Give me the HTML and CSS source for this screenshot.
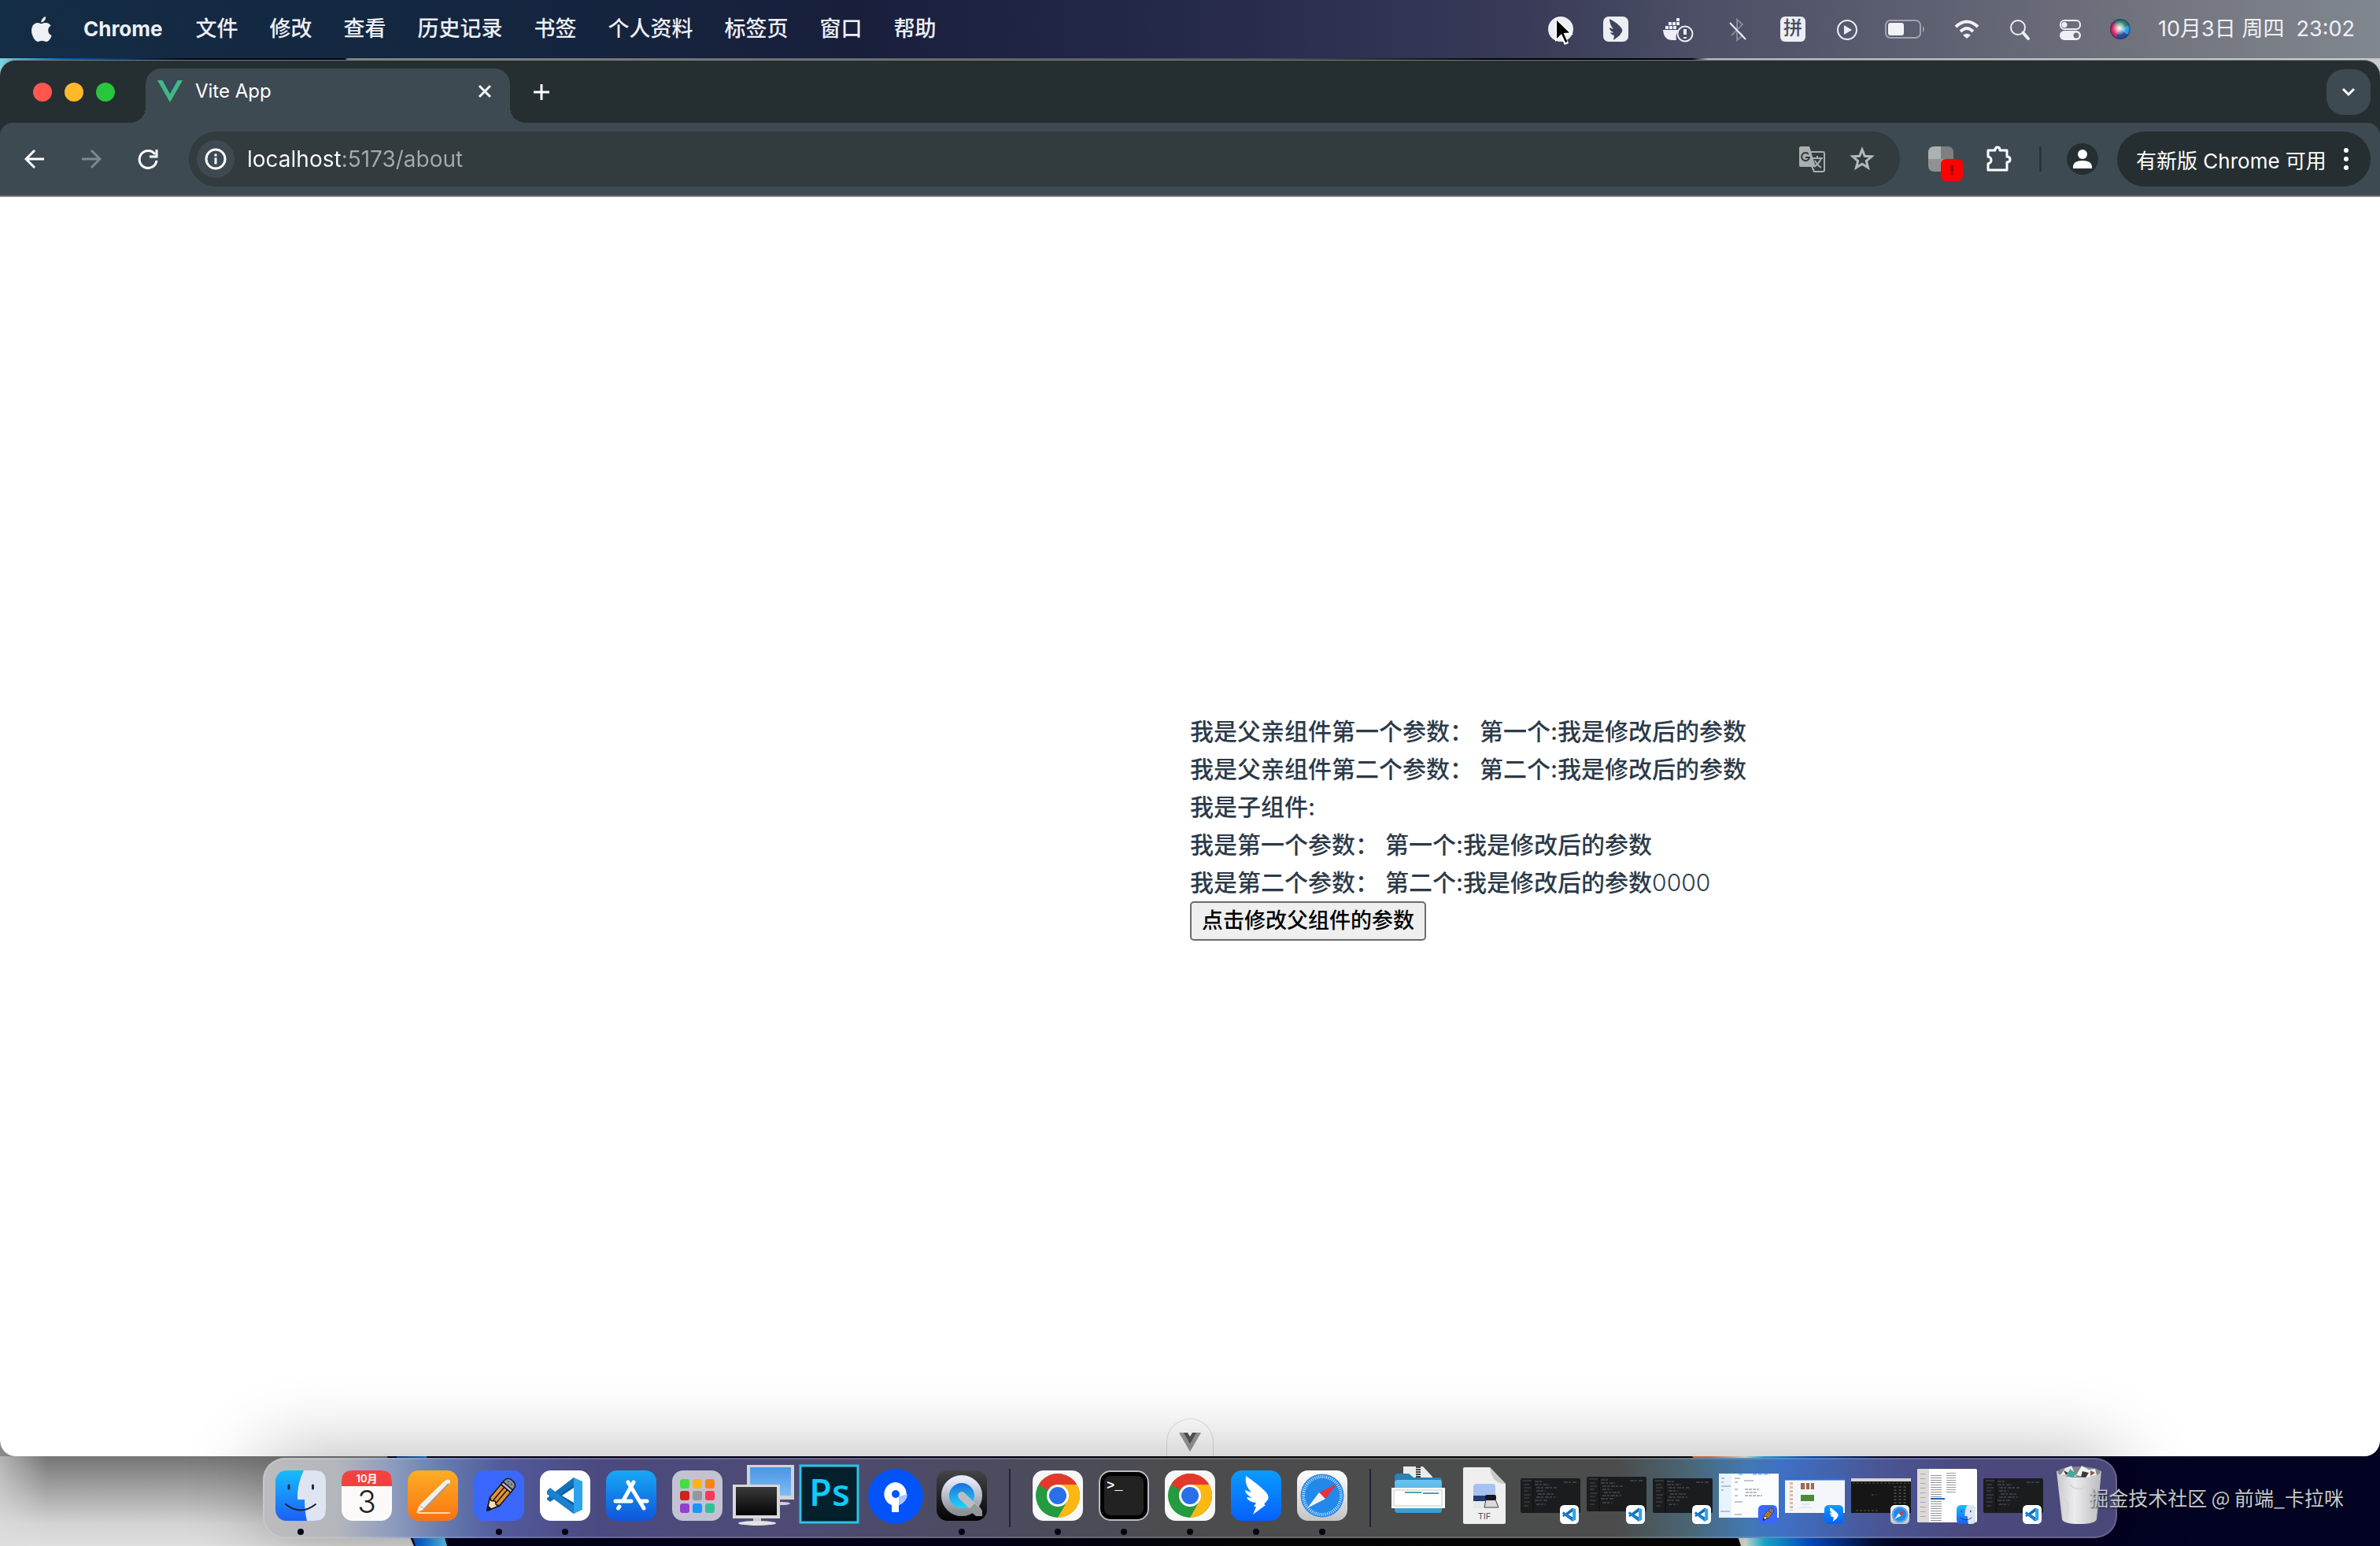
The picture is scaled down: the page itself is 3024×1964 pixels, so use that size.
FILE: index.html
```html
<!DOCTYPE html>
<html lang="zh-CN">
<head>
<meta charset="utf-8">
<meta name="viewport" content="width=device-width, initial-scale=1">
<title>Vite App</title>
<link rel="stylesheet" href="styles.css">
</head>
<body>
<svg class="defs" width="0" height="0" aria-hidden="true">
  <defs>
    <linearGradient id="g-finder" x2="0" y2="1"><stop stop-color="#17bdfd"/><stop offset="1" stop-color="#1c5ff5"/></linearGradient>
    <linearGradient id="g-pages" x2="0" y2="1"><stop stop-color="#fcad24"/><stop offset="1" stop-color="#fb7410"/></linearGradient>
    <linearGradient id="g-store" x2="0" y2="1"><stop stop-color="#17a9f5"/><stop offset="1" stop-color="#0f55dc"/></linearGradient>
    <linearGradient id="g-ding" x2="0" y2="1"><stop stop-color="#0a9cff"/><stop offset="1" stop-color="#0560ff"/></linearGradient>
    <linearGradient id="g-silver" x2="0" y2="1"><stop stop-color="#ffffff"/><stop offset="1" stop-color="#c4c4c4"/></linearGradient>
    <linearGradient id="g-qt" x2="0" y2="1"><stop stop-color="#434547"/><stop offset="1" stop-color="#030304"/></linearGradient>
    <linearGradient id="g-ring" x2="0" y2="1"><stop stop-color="#e6eafc"/><stop offset="1" stop-color="#8c9094"/></linearGradient>
    <linearGradient id="g-lens" x2="0" y2="1"><stop stop-color="#1b62d8"/><stop offset="1" stop-color="#22e4ff"/></linearGradient>
    <linearGradient id="g-sky" x2="0" y2="1"><stop stop-color="#4a94e4"/><stop offset="1" stop-color="#7fbef6"/></linearGradient>
    <linearGradient id="g-glass" x2="0" y2="1"><stop stop-color="#3a3a3a"/><stop offset="1" stop-color="#050505"/></linearGradient>
    <linearGradient id="g-folder" x2="0" y2="1"><stop stop-color="#69c3ee"/><stop offset="1" stop-color="#3a9bd1"/></linearGradient>
    <linearGradient id="g-bin" x2="1" y2="0"><stop stop-color="#c9c9cb"/><stop offset=".4" stop-color="#ececee"/><stop offset="1" stop-color="#bcbcc0"/></linearGradient>
    <radialGradient id="g-siri"><stop stop-color="#ffffff"/><stop offset=".35" stop-color="#ffffff" stop-opacity=".7"/><stop offset="1" stop-color="#ffffff" stop-opacity="0"/></radialGradient>

    <symbol id="finder" viewBox="0 0 64 64">
      <rect width="64" height="64" rx="14" fill="url(#g-finder)"/>
      <path d="M36 0H50Q64 0 64 14V50Q64 64 50 64H40Q37 52 37 37H28Q27 18 36 0Z" fill="#dfe4f3"/>
      <path d="M17 19v4M47.500 19v4" stroke="#1d2b3d" stroke-width="3" stroke-linecap="round"/>
      <path d="M13 43Q32 58 51 43" fill="none" stroke="#16222f" stroke-width="2" stroke-linecap="round"/>
    </symbol>
    <symbol id="notes" viewBox="0 0 64 64">
      <rect width="64" height="64" rx="14" fill="#3a68fc"/>
      <g transform="rotate(40 33 32)" stroke="#14161c" stroke-width="1.500" stroke-linejoin="round">
        <path d="M25 20V42L33 57L41 42V20Z" fill="#e5922e"/>
        <path d="M25 42L33 57L41 42L37 44L33 41L29 44Z" fill="#fbe0b4"/>
        <path d="M30 52L33 57L36 52Z" fill="#14161c"/>
        <path d="M30.500 20V42M35.500 20V42" fill="none"/>
        <path d="M25 20V14Q25 7 33 7T41 14V20Z" fill="#8a9098"/>
        <path d="M25 16h16v4H25z" fill="#b9bfd6"/>
        <path d="M30 11v1M35 11v1M32 14v.5" stroke-width="2"/>
      </g>
    </symbol>
    <symbol id="vscode" viewBox="0 0 64 64">
      <rect width="64" height="64" rx="14" fill="#fff"/>
      <path d="M43 9L19 31L13 26L9 28V30L43 55V41L28 32L43 22Z" fill="#0c61a5"/>
      <path d="M9 37L13 40L43 18V9L9 35Z" fill="#1470b8"/>
      <path d="M9 26L13 22L43 45V55L9 29Z" fill="#1c80cc"/>
      <path d="M43 9L54 14V50L43 55Z" fill="#2da3ef"/>
    </symbol>
    <symbol id="chrome" viewBox="0 0 64 64">
      <rect width="64" height="64" rx="14" fill="#f7f7f7"/>
      <circle cx="32" cy="32" r="28" fill="#249a41"/>
      <path d="M32 32L32 18H56.300A28 28 0 0 1 32 60L44 39Z" fill="#fcb714"/>
      <path d="M8.500 17A28 28 0 0 1 56.300 18H32A14 14 0 0 0 19.900 39Z" fill="#e5382b"/>
      <path d="M7.800 18L19.900 39L32 32Z" fill="#249a41"/>
      <circle cx="32" cy="32" r="14" fill="#fff"/>
      <circle cx="32" cy="32" r="11" fill="#2a6fea"/>
    </symbol>
    <symbol id="ding" viewBox="0 0 64 64">
      <rect width="64" height="64" rx="14" fill="url(#g-ding)"/>
      <path d="M19 7Q34 17 44 27Q49 32 47 37L42 43L44 44L28 56L32 46L29 46L32 41Q22 40 20 34L27 35Q18 30 18 25L26 28Q17 19 19 7Z" fill="#fff"/>
    </symbol>
    <symbol id="safari" viewBox="0 0 64 64">
      <rect width="64" height="64" rx="14" fill="url(#g-silver)"/>
      <circle cx="32" cy="32" r="27.500" fill="#2289ea"/>
      <circle cx="32" cy="32" r="24" fill="none" stroke="#c8e6ff" stroke-width="4" stroke-dasharray="1 1.500"/>
      <path d="M51 17L36 36L28 28Z" fill="#e8323c"/>
      <path d="M13 48L28 28L36 36Z" fill="#f0f2f5"/>
    </symbol>
    <symbol id="code" viewBox="0 0 76 44">
      <rect width="76" height="44" rx="2" fill="#1b1c1e"/>
      <path d="M3 3H14M4 8h7M4 12h9M4 16h6M4 21h9M4 25h7M4 30h8M4 35h6" stroke="#4a4d50"/>
      <path d="M18 4h9M18 8h18M20 12h26M20 16h12M22 20h22M20 24h24M18 28h16M20 33h12M55 5h16" stroke="#55606c" stroke-dasharray="5 1 3 2"/>
      <path d="M16 1V43" stroke="#0d0d0e"/>
    </symbol>
  </defs>
</svg>

<header class="menubar">
  <nav class="menus" aria-label="菜单栏">
    <button class="apple" aria-label="Apple">
      <svg width="26" height="32" viewBox="0 0 26 32" fill="#eef0f5"><path d="M18 0Q18.500 3 16.500 5.200T12.300 7.500Q12 4.800 14 2.500T18 0ZM12.900 9.300Q15.500 7.700 18.500 7.900Q22.400 8.200 24.700 11.500Q21 13.800 21.200 17.800Q21.400 22.400 25.700 24.200Q24.700 27.200 22.700 29.700Q20.900 31.900 19 32Q17.600 32 16.200 31.300Q13.500 30.200 10.800 31.300Q9.300 32 8.100 32Q6 31.800 4.200 29.400Q0 23.700 0 17.500Q.2 10.200 6 8.200Q8.200 7.500 10.500 8.500Q12 9.200 12.900 9.300Z"/></svg>
    </button>
    <button class="app-name">Chrome</button>
    <button>文件</button><button>修改</button><button>查看</button><button>历史记录</button><button>书签</button><button>个人资料</button><button>标签页</button><button>窗口</button><button>帮助</button>
  </nav>
  <div class="status">
    <svg width="34" height="40" viewBox="0 0 34 40"><circle cx="17" cy="20" r="16" fill="#eceef4"/><path d="M10 5V36L17 30L22 40L27 38L23 28L33 27Z" fill="#fff"/><path d="M12 9V32L18 26L23 37L25.500 36L20.500 25L28 24.500Z" fill="#000"/></svg>
    <svg width="46" height="40" viewBox="0 0 46 40"><rect x="7" y="4" width="32" height="32" rx="7" fill="#eceef4"/><path d="M15 7Q27 13 31 20Q32 23 29 26L28 28L20 34L21 28Q17 27 16 24Q20 25 20 24Q15 22 15 18L20 20Q15 14 15 7Z" fill="#40435a"/></svg>
    <svg width="52" height="40" viewBox="0 0 52 40" fill="#eceef4"><path d="M7 21H28Q22 25 24 34H19Q8 34 7 21Z"/><path d="M10 16h4v4h-4zM15 16h4v4h-4zM20 16h4v4h-4zM14 11h4v4h-4zM19 11h4v4h-4zM24 6h4v4h-4zM24 11h4v4h-4z"/><circle cx="35" cy="26" r="9.500" fill="#4b4e65" stroke="#eceef4" stroke-width="2"/><path d="M35 20v7M35 30v2" stroke="#eceef4" stroke-width="4"/></svg>
    <svg width="38" height="40" viewBox="0 0 38 40" fill="none"><path d="M12 28L26 14L19 8V34L26 28L22 24" stroke="#85889b" stroke-width="2"/><path d="M10 12L30 33" stroke="#eceef4" stroke-width="2"/></svg>
    <span class="ime">拼</span>
    <svg width="34" height="40" viewBox="0 0 34 40"><circle cx="17" cy="21" r="12" fill="none" stroke="#eceef4" stroke-width="2"/><path d="M13 15L23 21L13 27Z" fill="#eceef4"/></svg>
    <svg width="54" height="40" viewBox="0 0 54 40"><rect x="2" y="9" width="44" height="22" rx="6" fill="none" stroke="#a1a3b0" stroke-width="2"/><rect x="5" y="12" width="20" height="16" rx="3" fill="#f1f2f7"/><path d="M49 16Q53 20 49 24Z" fill="#a1a3b0"/></svg>
    <svg width="42" height="40" viewBox="0 0 42 40" fill="none" stroke="#f0f1f7" stroke-width="4"><path d="M7 17Q21 4 35 17M13 23Q21 15 29 23"/><path d="M16 27.500Q21 24 26 27.500L21 32Z" fill="#f0f1f7" stroke="none"/></svg>
    <svg width="36" height="40" viewBox="0 0 36 40" fill="none" stroke="#eff0f6"><circle cx="14" cy="18" r="9" stroke-width="2"/><path d="M20.500 24.500L27 32" stroke-width="4" stroke-linecap="round"/></svg>
    <svg width="30" height="40" viewBox="0 0 30 40"><rect x="2" y="9" width="25" height="11" rx="5" fill="none" stroke="#eff0f6" stroke-width="2"/><circle cx="7" cy="14.500" r="3.500" fill="#eff0f6"/><rect x="1" y="22" width="27" height="12" rx="6" fill="#eff0f6"/><circle cx="22" cy="28" r="3.500" fill="#6c6e7c"/></svg>
    <svg width="36" height="40" viewBox="0 0 36 40"><circle cx="18" cy="20" r="13" fill="#2a4a9c"/><path d="M18 20L11 9A13 13 0 0 0 12 31.500Z" fill="#d02a62"/><path d="M18 20L9 10.500A13 13 0 0 1 30 15Z" fill="#2c8072"/><path d="M18 20L30 14.500A13 13 0 0 1 28 28Z" fill="#2f9fe6"/><circle cx="18" cy="20" r="12" fill="none" stroke="#35305c" stroke-opacity=".6" stroke-width="2"/><circle cx="17" cy="19" r="9" fill="url(#g-siri)"/></svg>
    <time class="clock">10月3日 周四&nbsp; 23:02</time>
  </div>
</header>

<main class="window">
  <div class="tabstrip">
    <div class="lights"><button class="light red" aria-label="关闭"></button><button class="light yellow" aria-label="最小化"></button><button class="light green" aria-label="缩放"></button></div>
    <div class="tab">
      <svg width="32" height="28" viewBox="0 0 32 28"><path d="M0 0H6.500L16 17L25.500 0H32L16 28Z" fill="#41b883"/><path d="M6.500 0H12.500L16 6.500L19.500 0H25.500L16 17Z" fill="#35495e"/></svg>
      <span class="tab-title">Vite App</span>
      <button class="tab-close" aria-label="关闭标签页"><svg width="18" height="18" viewBox="0 0 18 18"><path d="M2 2L16 16M16 2L2 16" stroke="#f4f7f8" stroke-width="3"/></svg></button>
    </div>
    <button class="tab-new" aria-label="新标签页"><svg width="22" height="22" viewBox="0 0 22 22"><path d="M11 1V21M1 11H21" stroke="#fff" stroke-width="3"/></svg></button>
    <button class="tab-search" aria-label="搜索标签页"><svg width="18" height="14" viewBox="0 0 18 14"><path d="M2 3L9 10L16 3" fill="none" stroke="#fff" stroke-width="3"/></svg></button>
  </div>
  <div class="toolbar">
    <button class="tool" aria-label="后退"><svg width="26" height="26" viewBox="0 0 26 26" fill="none" stroke="#fff" stroke-width="3"><path d="M25 13H3M13 2L2 13L13 24"/></svg></button>
    <button class="tool" aria-label="前进"><svg width="26" height="26" viewBox="0 0 26 26" fill="none" stroke="#7c8990" stroke-width="3"><path d="M1 13H23M13 2L24 13L13 24"/></svg></button>
    <button class="tool" aria-label="重新加载"><svg width="26" height="26" viewBox="0 0 26 26" fill="none" stroke="#fff" stroke-width="3"><path d="M22 7A11 11 0 1 0 24 15"/><path d="M24 1V10H15" /></svg></button>
    <div class="address">
      <button class="info" aria-label="网站信息"><svg width="28" height="28" viewBox="0 0 28 28" fill="none" stroke="#fff" stroke-width="3"><circle cx="14" cy="14" r="12"/><path d="M14 12.500V20.500M14 7.500V10.500"/></svg></button>
      <input class="url" type="text" aria-label="地址" value="localhost:5173/about">
      <button class="in-address" aria-label="翻译"><svg width="34" height="34" viewBox="0 0 34 34"><path d="M3 1H14L22 27H3Q1 27 1 25V3Q1 1 3 1Z" fill="#a9afb0"/><path d="M16 8H31Q33 8 33 10V31Q33 33 31 33H20L17 26" fill="none" stroke="#a9afb0" stroke-width="2"/><path d="M13 11A5 5 0 1 0 14 15H9" fill="none" stroke="#323b3d" stroke-width="2"/><path d="M18 16H31M24 13V16M29 16Q26 23 20 27M21 19Q24 25 29 28" fill="none" stroke="#a9afb0" stroke-width="2"/></svg></button>
      <button class="in-address" aria-label="收藏"><svg width="32" height="32" viewBox="0 0 32 32"><path d="M16 4L19.300 12.200L28 12.800L21.300 18.500L23.500 27L16 22.300L8.500 27L10.700 18.500L4 12.800L12.700 12.200Z" fill="none" stroke="#b4babb" stroke-width="3"/></svg></button>
    </div>
    <button class="tool" aria-label="扩展"><svg width="56" height="60" viewBox="-10 -13 56 60"><path d="M17 1V17H1V9Q1 1 9 1Z" fill="#aeb1b3"/><path d="M17 1H25Q33 1 33 9V17H17Z" fill="#7d8082"/><path d="M1 17H17V33H9Q1 33 1 25Z" fill="#8f9294"/><path d="M17 17H33V33H17Z" fill="#a1a1a3"/><rect x="17" y="17" width="28" height="28" rx="6" fill="#fe0200"/><path d="M31 25V33M31 35V37" stroke="#7a0000" stroke-width="3"/></svg></button>
    <button class="tool" aria-label="扩展程序"><svg width="36" height="36" viewBox="0 0 36 36"><path d="M5 7H14Q14 3 17 3T20 7H29V15Q33 15 33 18.500T29 22V32H5V24Q9 23 9 19.500T5 15Z" fill="none" stroke="#fff" stroke-width="3" stroke-linejoin="round"/></svg></button>
    <span class="divider"></span>
    <button class="tool" aria-label="个人资料"><svg width="40" height="40" viewBox="0 0 40 40"><circle cx="20" cy="20" r="20" fill="#252f31"/><circle cx="20" cy="14" r="6" fill="#fff"/><path d="M8 32V29Q9 22 20 22T32 29V32Z" fill="#fff"/></svg></button>
    <button class="update">有新版 Chrome 可用<svg width="6" height="28" viewBox="0 0 6 28" fill="#fff"><circle cx="3" cy="3" r="3"/><circle cx="3" cy="14" r="3"/><circle cx="3" cy="25" r="3"/></svg></button>
  </div>
  <section class="page">
    <div class="content">
      <p>我是父亲组件第一个参数： 第一个:我是修改后的参数</p>
      <p>我是父亲组件第二个参数： 第二个:我是修改后的参数</p>
      <p>我是子组件:</p>
      <p>我是第一个参数： 第一个:我是修改后的参数</p>
      <p>我是第二个参数： 第二个:我是修改后的参数<span class="digits">0000</span></p>
      <button class="change">点击修改父组件的参数</button>
    </div>
    <button class="devtools" aria-label="Vue DevTools"><svg width="28" height="24" viewBox="0 0 28 24"><path d="M0 0H5.500L14 14.500L22.500 0H28L14 24Z" fill="#9a9a9a"/><path d="M5.500 0H11L14 5L17 0H22.500L14 14.500Z" fill="#565656"/></svg></button>
  </section>
</main>

<footer class="desk">
  <svg class="wallpaper" viewBox="0 0 3024 114" preserveAspectRatio="none" aria-hidden="true">
    <defs>
      <linearGradient id="w-left" x2="0" y2="1"><stop stop-color="#757575"/><stop offset=".45" stop-color="#adadad"/><stop offset=".75" stop-color="#d2d3d2"/><stop offset="1" stop-color="#dedfde"/></linearGradient>
      <linearGradient id="w-edge"><stop stop-color="#dcdddc" stop-opacity=".6"/><stop offset="1" stop-color="#dcdddc" stop-opacity="0"/></linearGradient>
      <linearGradient id="w-base"><stop stop-color="#03021f"/><stop offset=".4" stop-color="#00001c"/><stop offset=".52" stop-color="#060608"/><stop offset=".7" stop-color="#050505"/><stop offset="1" stop-color="#060608"/></linearGradient>
      <linearGradient id="w-streak"><stop stop-color="#0a3c9c"/><stop offset=".5" stop-color="#0d6fe0"/><stop offset="1" stop-color="#5fd0f5"/></linearGradient>
      <linearGradient id="w-right"><stop stop-color="#e87840"/><stop offset=".08" stop-color="#e87840"/><stop offset=".25" stop-color="#e9f4e6"/><stop offset=".34" stop-color="#19bfe8"/><stop offset=".55" stop-color="#0753d8"/><stop offset=".85" stop-color="#03103c"/><stop offset="1" stop-color="#020222"/></linearGradient>
    </defs>
    <rect width="3024" height="114" fill="url(#w-base)"/>
    <path d="M0 0H492Q500 60 526 114H0Z" fill="url(#w-left)"/>
    <rect width="60" height="114" fill="url(#w-edge)"/>
    <path d="M504 0H542Q552 60 568 114H528Q508 60 504 0Z" fill="url(#w-streak)"/>
    <path d="M2150 0H3024V114H2212Q2190 60 2150 0Z" fill="#020222"/>
    <path d="M2150 0H2420V114H2212Q2196 60 2150 0Z" fill="url(#w-right)"/>
  </svg>
  <nav class="dock" aria-label="程序坞">
    <button class="item running" aria-label="访达"><svg class="art"><use href="#finder" x="10" y="14" width="64" height="64"/></svg></button>
    <button class="item" aria-label="日历"><svg class="art"><rect x="10" y="14" width="64" height="64" rx="14" fill="#fbfaf8"/><path d="M10 34V28Q10 14 24 14H60Q74 14 74 28V34Z" fill="#f2423f"/><text x="42" y="29" font-size="13" font-weight="600" fill="#fff" text-anchor="middle">10月</text><text x="42" y="68" font-size="39" font-weight="300" fill="#222" text-anchor="middle">3</text></svg></button>
    <button class="item" aria-label="Pages"><svg class="art"><rect x="10" y="14" width="64" height="64" rx="14" fill="url(#g-pages)"/><path d="M23 68H64" stroke="#ffd9a0" stroke-width="2"/><path d="M21 68L25 58L55 29Q60 24 63 26T61 33L31 63Z" fill="#f3f0ec"/><path d="M31 63L62 31" stroke="#a99b8e" stroke-width="2"/><path d="M25 58L31 63" stroke="#b0a294"/></svg></button>
    <button class="item running" aria-label="便笺"><svg class="art"><use href="#notes" x="10" y="14" width="64" height="64"/></svg></button>
    <button class="item running" aria-label="Visual Studio Code"><svg class="art"><use href="#vscode" x="10" y="14" width="64" height="64"/></svg></button>
    <button class="item" aria-label="App Store"><svg class="art"><rect x="10" y="14" width="64" height="64" rx="14" fill="url(#g-store)"/><g stroke="#fff" stroke-width="5" stroke-linecap="round"><path d="M45 29L32 52M38 29L58 62M22 53H42M53 53H62M27 60L25.500 62"/></g></svg></button>
    <button class="item" aria-label="启动台"><svg class="art"><rect x="10" y="14" width="64" height="64" rx="14" fill="#c4c2d2"/><g><rect x="20" y="25" width="12" height="12" rx="3" fill="#44dc48"/><rect x="36" y="25" width="12" height="12" rx="3" fill="#fbb416"/><rect x="52" y="25" width="12" height="12" rx="3" fill="#fa8415"/><rect x="20" y="40" width="12" height="12" rx="3" fill="#d3211d"/><rect x="36" y="40" width="12" height="12" rx="3" fill="#93989e"/><rect x="52" y="40" width="12" height="12" rx="3" fill="#fa3a58"/><rect x="20" y="56" width="12" height="12" rx="3" fill="#9340cf"/><rect x="36" y="56" width="12" height="12" rx="3" fill="#1b93fb"/><rect x="52" y="56" width="12" height="12" rx="3" fill="#31c197"/></g></svg></button>
    <button class="item" aria-label="屏幕共享"><svg class="art"><rect x="21" y="7" width="60" height="44" fill="#d3d3d3"/><rect x="25" y="10" width="52" height="36" fill="url(#g-sky)"/><ellipse cx="66" cy="56" rx="10" ry="2" fill="#cfcfcf"/><rect x="3" y="32" width="60" height="43" fill="#d9d9d9"/><rect x="7" y="35" width="52" height="36" fill="url(#g-glass)"/><path d="M29 75h10v5H29z" fill="#c9c9c9"/><ellipse cx="34" cy="81" rx="24" ry="3" fill="#e2e2e2"/></svg></button>
    <button class="item" aria-label="Photoshop"><svg class="art"><rect x="5" y="8" width="73" height="72" fill="#03202c" stroke="#2bc3e6" stroke-width="3"/><text class="ps" x="42" y="59" font-size="47" fill="#10cbff" text-anchor="middle">Ps</text></svg></button>
    <button class="item" aria-label="Sourcetree"><svg class="art"><circle cx="42" cy="47" r="35" fill="#0353fb"/><path d="M42 29A15 15 0 0 0 37 58V67H46V58A15 15 0 0 0 42 29Z" fill="#fff"/><path d="M46 58A15 15 0 0 0 57 44L46 47Z" fill="#a9c5ff"/><circle cx="42" cy="44" r="5" fill="#0353fb"/></svg></button>
    <button class="item running" aria-label="QuickTime Player"><svg class="art"><rect x="10" y="14" width="64" height="64" rx="14" fill="url(#g-qt)"/><circle cx="42" cy="46" r="21" fill="url(#g-lens)" stroke="url(#g-ring)" stroke-width="10"/><path d="M42 46L62 65" stroke="#b9bdc1" stroke-width="10" stroke-linecap="round"/><path d="M58 56L68 65V72H60L51 64Z" fill="#94989b"/></svg></button>
    <span class="gap"></span>
    <button class="item running" aria-label="Chrome"><svg class="art"><use href="#chrome" x="10" y="14" width="64" height="64"/></svg></button>
    <button class="item running" aria-label="终端"><svg class="art"><rect x="11" y="15" width="62" height="62" rx="14" fill="#000" stroke="#b9bdc0" stroke-width="2"/><rect x="17" y="21" width="50" height="50" rx="8" fill="#222"/><text class="prompt" x="20" y="38" font-size="17" fill="#fff">&gt;_</text></svg></button>
    <button class="item running" aria-label="Chrome"><svg class="art"><use href="#chrome" x="10" y="14" width="64" height="64"/></svg></button>
    <button class="item running" aria-label="钉钉"><svg class="art"><use href="#ding" x="10" y="14" width="64" height="64"/></svg></button>
    <button class="item running" aria-label="Safari"><svg class="art"><use href="#safari" x="10" y="14" width="64" height="64"/></svg></button>
    <span class="gap"></span>
    <button class="item" aria-label="下载"><svg class="art"><path d="M23 9H48L60 22V30H23Z" fill="#ececec"/><path d="M42 9V24" stroke="#444" stroke-width="6" stroke-dasharray="2 1"/><path d="M12 22Q12 18 16 18H30L36 23H69Q72 23 72 27V50H12Z" fill="#2b82b5"/><path d="M12 30Q12 26 16 26H68Q72 26 72 30V64Q72 68 68 68H16Q12 68 12 64Z" fill="url(#g-folder)"/><rect x="8" y="36" width="68" height="26" fill="#fff"/><rect x="11" y="39" width="61" height="20" fill="none" stroke="#c3c7cb"/><path d="M25 42H46M48 43H68" stroke="#4aa3b4" stroke-width="2"/></svg></button>
    <button class="item" aria-label="TIF"><svg class="art"><path d="M17 10H49L69 31V80Q69 82 67 82H17Q15 82 15 80V12Q15 10 17 10Z" fill="#efefef"/><path d="M49 10Q51 31 69 31Z" fill="#c8c8c8"/><rect x="28" y="31" width="28" height="31" rx="4" fill="#a7c2f0"/><path d="M28 46H56V53H28Z" fill="#1f3d74"/><path d="M28 53H56V58Q56 62 52 62H32Q28 62 28 58Z" fill="#e6e8ea"/><path d="M44 51H56L60 61H42Z" fill="#d9d9d9" stroke="#444"/><rect x="43" y="45" width="14" height="7" rx="2" fill="#181818"/><text x="42" y="76" font-size="11" fill="#555" text-anchor="middle">TIF</text></svg></button>
    <button class="item" aria-label="代码窗口"><svg class="art"><use href="#code" x="4" y="24" width="76" height="44"/><use href="#vscode" x="54" y="58" width="24" height="24"/></svg></button>
    <button class="item" aria-label="代码窗口"><svg class="art"><use href="#code" x="4" y="22" width="76" height="44"/><use href="#vscode" x="54" y="58" width="24" height="24"/></svg></button>
    <button class="item" aria-label="代码窗口"><svg class="art"><use href="#code" x="4" y="24" width="76" height="44"/><use href="#vscode" x="54" y="58" width="24" height="24"/></svg></button>
    <button class="item" aria-label="笔记窗口"><svg class="art"><rect x="4" y="18" width="76" height="56" fill="#fbfdff"/><path d="M4 18h16v56H4z" fill="#e7f3fd"/><path d="M7 24h4M7 29h3M7 34h12M7 39h3M24 24h7M36 27h12M24 29h4M24 38h4M24 46h4M24 54h10M24 70h9M6 66h12" stroke="#8a9096"/><path d="M37 38h18M38 42h14M37 46h22" stroke="#777" stroke-dasharray="4 1"/><path d="M29 19h6M47 19h22" stroke="#4a8ef5" stroke-dasharray="5 2"/><use href="#notes" x="54" y="58" width="24" height="24"/></svg></button>
    <button class="item" aria-label="钉钉窗口"><svg class="art"><rect x="4" y="24" width="76" height="44" fill="#f3f6fa"/><path d="M4 25h76" stroke="#2d6fd6" stroke-width="3"/><path d="M12 29v36" stroke="#e5b9a5" stroke-width="4" stroke-dasharray="3 2"/><rect x="24" y="30" width="17" height="8" fill="#9a6b55"/><path d="M30 30v8M36 30v8" stroke="#f0e2d8" stroke-width="2"/><rect x="24" y="45" width="17" height="8" fill="#4c8b35"/><path d="M24 57h12M22 61h16" stroke="#d5dae0"/><use href="#ding" x="54" y="58" width="24" height="24"/></svg></button>
    <button class="item" aria-label="Safari 窗口"><svg class="art"><rect x="4" y="24" width="76" height="44" fill="#161616"/><path d="M4 26h76" stroke="#d8d3d1" stroke-width="4"/><path d="M6 30h72M30 45h6M10 65h30" stroke="#555" stroke-dasharray="3 2"/><path d="M60 34v30M66 34v30M72 34v30" stroke="#444" stroke-width="3" stroke-dasharray="2 2"/><use href="#safari" x="54" y="58" width="24" height="24"/></svg></button>
    <button class="item" aria-label="访达窗口"><svg class="art"><rect x="4" y="12" width="76" height="68" rx="2" fill="#fff"/><path d="M4 14q0-2 2-2h13v68H6q-2 0-2-2z" fill="#dcd9d8"/><path d="M11 18v56" stroke="#aaa" stroke-width="7" stroke-dasharray="1 5"/><path d="M28 20v58" stroke="#8e9296" stroke-width="14" stroke-dasharray="1 2"/><path d="M47 17v26" stroke="#999" stroke-width="12" stroke-dasharray="1 2"/><path d="M21 50h18" stroke="#1d62b8" stroke-width="2"/><use href="#finder" x="54" y="58" width="24" height="24"/></svg></button>
    <button class="item" aria-label="代码窗口"><svg class="art"><use href="#code" x="4" y="24" width="76" height="44"/><use href="#vscode" x="54" y="58" width="24" height="24"/></svg></button>
    <button class="item" aria-label="废纸篓"><svg class="art"><path d="M13 15Q41 6 70 15L64 76Q62 82 42 82T20 76Z" fill="url(#g-bin)"/><ellipse cx="41.500" cy="16" rx="27" ry="7" fill="#85878c"/><path d="M18 20L24 11L32 8L38 22Z" fill="#e9e9eb"/><path d="M30 12L38 18L34 23L26 21Z" fill="#3fa99c"/><path d="M38 20L45 8L54 13L62 12L64 20L52 23Z" fill="#eef0f2"/><path d="M46 15L54 17L50 23L44 22ZM22 14L28 17L25 20Z" fill="#3e3836"/><path d="M56 14L62 17L56 21Z" fill="#8a5a48"/><path d="M30 32Q40 42 52 34M24 50Q30 60 26 74" fill="none" stroke="#d6d6d9" stroke-width="2"/></svg></button>
  </nav>
  <p class="watermark">掘金技术社区 @ 前端_卡拉咪</p>
</footer>
</body>
</html>
```
FILE: styles.css
```css
* {
  box-sizing: border-box;
}

body {
  margin: 0;
  min-height: 100vh;
  display: flex;
  flex-direction: column;
  overflow-x: hidden;
  font-family: Inter, "Noto Sans CJK SC", sans-serif;
  background: linear-gradient(90deg, #7fd3dc 0, #0d5fb0 80px, #020510 240px, #020510 438px, #8a8888 442px, #555 1600px, #000 1900px, #000 2150px, #b8babc 2170px, #c9cbcc 100%);
}

button {
  margin: 0;
  padding: 0;
  border: 0;
  background: none;
  color: inherit;
  font: inherit;
}

svg {
  display: block;
  flex: none;
}

.defs {
  position: absolute;
}

/* System menu bar */
.menubar {
  height: 74px;
  flex: none;
  display: flex;
  align-items: center;
  justify-content: space-between;
  padding: 0 32px 0 40px;
  color: #eef0f7;
  background: linear-gradient(90deg, #132d44 0%, #14263f 20%, #181f3b 36%, #25294a 50%, #383a57 64%, #4b4e65 71%, #5f6272 82%, #73757f 91%, #80878e 100%);
}

.menus {
  display: flex;
  align-items: center;
  gap: 40px;
  font-size: 27px;
  font-weight: 500;
  line-height: 40px;
}

.app-name {
  padding-right: 2px;
  font-size: 26px;
  font-weight: 700;
}

.status {
  display: flex;
  align-items: center;
  gap: 30px;
  line-height: 40px;
}

.ime {
  width: 32px;
  height: 32px;
  margin: 0 6px;
  border-radius: 6px;
  background: #eceef4;
  color: #4a4c5e;
  font-size: 24px;
  font-weight: 500;
  line-height: 30px;
  text-align: center;
}

.clock {
  font-size: 27px;
  font-weight: 400;
  white-space: nowrap;
}

/* Browser window */
.window {
  flex: 1;
  display: flex;
  flex-direction: column;
  margin-top: 2px;
  border-top: 1px solid #747b7d;
  border-radius: 20px;
  overflow: hidden;
  background: #252f31;
  color: #fff;
}

.tabstrip {
  height: 79px;
  flex: none;
  display: flex;
  align-items: center;
  padding: 0 12px 0 42px;
}

.lights {
  display: flex;
  gap: 16px;
  margin-right: 39px;
}

.light {
  width: 24px;
  height: 24px;
  border-radius: 50%;
}

.red { background: #ff5650; }
.yellow { background: #ffb92b; }
.green { background: #26c73c; }

.tab {
  position: relative;
  align-self: flex-end;
  width: 463px;
  height: 69px;
  display: flex;
  align-items: center;
  gap: 16px;
  padding: 0 23px 12px 15px;
  border-radius: 20px 20px 0 0;
  background: #3e4a52;
}

.tab::before,
.tab::after {
  content: "";
  position: absolute;
  bottom: 0;
  width: 20px;
  height: 20px;
}

.tab::before {
  right: 100%;
  background: radial-gradient(circle at 0 0, transparent 20px, #3e4a52 20px);
}

.tab::after {
  left: 100%;
  background: radial-gradient(circle at 100% 0, transparent 20px, #3e4a52 20px);
}

.tab-title {
  flex: 1;
  font-size: 24px;
  line-height: 32px;
}

.tab-new {
  margin-left: 29px;
}

.tab-search {
  width: 56px;
  height: 58px;
  margin-left: auto;
  display: grid;
  place-items: center;
  border-radius: 22px;
  background: #3e4a52;
}

.toolbar {
  height: 94px;
  flex: none;
  display: flex;
  align-items: center;
  padding: 0 12px 0 8px;
  border-bottom: 2px solid #6c6e71;
  border-radius: 16px 16px 0 0;
  background: #3e4a52;
}

.tool {
  width: 72px;
  height: 60px;
  flex: none;
  display: grid;
  place-items: center;
}

.address {
  flex: 1;
  height: 70px;
  display: flex;
  align-items: center;
  margin: 0 17px 0 16px;
  padding: 0 16px 0 10px;
  border-radius: 35px;
  background: #323b3d;
}

.info {
  width: 48px;
  height: 48px;
  flex: none;
  display: grid;
  place-items: center;
  border-radius: 50%;
  background: #3e4a52;
}

.url {
  flex: 1;
  min-width: 0;
  height: 40px;
  margin-left: 16px;
  padding: 0;
  border: 0;
  outline: 0;
  font: 400 28px/40px Inter, sans-serif;
  color: transparent;
  background: linear-gradient(90deg, #fff 121px, #a4abac 121px);
  background-clip: text;
  -webkit-background-clip: text;
}

.in-address {
  width: 64px;
  display: grid;
  place-items: center;
}

.divider {
  width: 3px;
  height: 32px;
  margin: 0 16px;
  background: #28363d;
}

.update {
  width: 322px;
  height: 70px;
  margin-left: 8px;
  padding: 0 28px 0 24px;
  display: flex;
  align-items: center;
  justify-content: space-between;
  border-radius: 35px;
  background: #252f31;
  font-size: 26px;
  font-weight: 400;
  white-space: nowrap;
}

/* Page */
.page {
  position: relative;
  flex: 1;
  display: grid;
  grid-template-columns: 1fr 1fr;
  align-items: center;
  background: #fff;
  color: #2c3e50;
}

.content {
  grid-column: 2;
  font-size: 30px;
  font-weight: 500;
  line-height: 48px;
  color: #2c3a49;
}

.content p {
  margin: 0;
}

.digits {
  font-weight: 300;
}

.change {
  display: block;
  height: 50px;
  padding: 0 13px;
  border: 2px solid #6b6b6b;
  border-radius: 5px;
  background: #efefef;
  color: #000;
  font-size: 27px;
  line-height: 40px;
}

.devtools {
  position: absolute;
  bottom: 0;
  left: 50%;
  width: 60px;
  height: 48px;
  margin-left: -30px;
  display: grid;
  place-items: center;
  padding-top: 10px;
  border: 1px solid #e2e2e2;
  border-bottom: 0;
  border-radius: 30px 30px 0 0;
  background: #fff;
}

/* Desktop and dock */
.desk {
  position: relative;
  height: 114px;
  flex: none;
  display: flex;
  justify-content: center;
  align-items: flex-start;
  padding-top: 2px;
}

.desk::before {
  content: "";
  position: absolute;
  z-index: -1;
  left: 0;
  right: 0;
  top: -30px;
  height: 40px;
  background: linear-gradient(90deg, #8a8a8a 0, #777 60px, #777 480px, #020222 520px);
}

.wallpaper {
  position: absolute;
  top: 0;
  left: 0;
  width: 100%;
  height: 114px;
}

.dock {
  position: relative;
  display: flex;
  height: 102px;
  padding: 0 4px;
  border: 2px solid rgba(255, 255, 255, 0.16);
  border-radius: 28px;
  background: linear-gradient(90deg, #bcbcbe 0, #b4b6bc 4%, #8d9bbd 7%, #6378ae 10%, #52599a 13%, #4b4a80 18%, #4d4b76 27%, #4c4b5e 40%, #4c4c4e 50%, #4b4c4b 73%, #4a6675 77%, #4179b3 80%, #3f70c4 82%, #495696 87%, #4b497d 92%, #4a4878 100%) border-box;
  box-shadow: 0 0 100px rgba(0, 0, 0, 0.32);
}

.item {
  position: relative;
  width: 84px;
  height: 98px;
}

.art {
  width: 84px;
  height: 98px;
  font-family: Inter, "Noto Sans CJK SC", sans-serif;
}

.ps {
  font-family: "Open Sans", sans-serif;
  font-weight: 600;
}

.prompt {
  font-family: "Liberation Mono", monospace;
  font-weight: 700;
}

.running::after {
  content: "";
  position: absolute;
  bottom: 2px;
  left: 38px;
  width: 8px;
  height: 8px;
  border-radius: 50%;
  background: #050514;
}

.gap {
  width: 2px;
  height: 74px;
  margin: 12px 18px 0;
  background: #242438;
}

.watermark {
  position: absolute;
  right: 46px;
  top: 34px;
  margin: 0;
  color: #c6c7cd;
  font-family: "Noto Sans CJK SC", sans-serif;
  font-size: 25px;
  line-height: 36px;
  text-shadow: 1px 1px 2px rgba(0, 0, 0, 0.7);
}
```
